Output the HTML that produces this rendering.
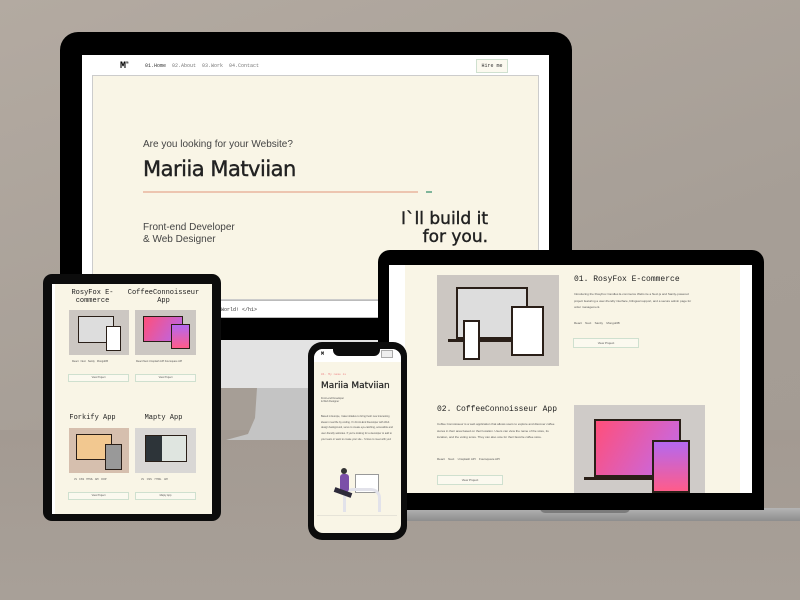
<!DOCTYPE html>
<html><head><meta charset="utf-8"><style>
*{margin:0;padding:0;box-sizing:border-box}
body{width:800px;height:600px;overflow:hidden;position:relative;background:linear-gradient(160deg,#b3aaa1 0%,#a69e96 55%,#a39b93 100%);font-family:"Liberation Sans",sans-serif}
.a{position:absolute}
.mono{font-family:"Liberation Mono",monospace}
.cream{background:#f9f5e6}
.img{background:#ccc7c2}
.btn{border:1px solid #cfe0cf;background:#fbf9ef;font-size:3px;text-align:center;color:#555}
.tiny{font-size:3px;color:#555;line-height:4px}
.hd{font-family:'DejaVu Sans',sans-serif;-webkit-text-stroke:0.4px #222}
</style></head><body>
<div class="a" style="left:0;top:430px;width:800px;height:170px;background:linear-gradient(180deg,#a39a92,#a8a098)"></div>

<!-- iMac chin and stand -->
<div class="a" style="left:212px;top:338px;width:170px;height:50px;background:#e3e3e3"></div>
<div class="a" style="left:226px;top:388px;width:156px;height:52px;background:#c4c4c4;clip-path:polygon(31px 0,100% 0,100% 100%,0 100%,22px 46px,29px 30px)"></div>
<!-- iMac -->
<div class="a" style="left:60px;top:32px;width:512px;height:308px;background:#000;border-radius:18px 18px 0 0"></div>
<div class="a" style="left:82px;top:55px;width:467px;height:263px;background:#fff"></div>
<div class="a mono" style="left:120px;top:61px;font-size:10px;font-weight:bold">M<sup style="font-size:4px">m</sup></div>
<div class="a mono" style="left:145px;top:63px;font-size:5px;color:#333">01.Home &nbsp;<span style="color:#777">02.About &nbsp;03.Work &nbsp;04.Contact</span></div>
<div class="a mono btn" style="left:476px;top:59px;width:32px;height:14px;font-size:5px;line-height:12px;color:#333">Hire me</div>
<div class="a cream" style="left:92px;top:75px;width:447px;height:225px;border:1px solid #ccc"></div>
<div class="a" style="left:143px;top:139px;font-size:10px;color:#444">Are you looking for your Website?</div>
<div class="a hd" style="left:143px;top:157px;font-size:21px;color:#222;letter-spacing:-0.5px">Mariia Matviian</div>
<div class="a" style="left:143px;top:191px;width:275px;height:2px;background:#edc5b0"></div>
<div class="a" style="left:426px;top:191px;width:6px;height:2px;background:#7fb59a"></div>
<div class="a" style="left:143px;top:222px;font-size:10px;color:#444;line-height:12px">Front-end Developer<br>&amp; Web Designer</div>
<div class="a hd" style="left:390px;top:210px;width:98px;text-align:right;font-size:17px;color:#222;line-height:18px">I`ll build it<br>for you.</div>
<div class="a" style="left:92px;top:300px;width:447px;height:18px;background:#fff;border-top:1px solid #bbb;border-bottom:1px solid #bbb"></div>
<div class="a mono" style="left:221px;top:307px;font-size:5px;color:#333">World! &lt;/h1&gt;</div>

<!-- Laptop -->
<div class="a" style="left:370px;top:508px;width:430px;height:13px;background:linear-gradient(#b4b4b4,#8d8d8d)"></div>
<div class="a" style="left:540px;top:508px;width:90px;height:5px;background:#7b7b7b;border-radius:0 0 5px 5px"></div>
<div class="a" style="left:378px;top:250px;width:386px;height:260px;background:#000;border-radius:12px 12px 0 0"></div>
<div class="a" style="left:389px;top:265px;width:363px;height:228px;background:#fff"></div>
<div class="a cream" style="left:405px;top:265px;width:335px;height:228px"></div>
<div class="a img" style="left:437px;top:275px;width:122px;height:91px"></div>
<div class="a" style="left:456px;top:287px;width:72px;height:52px;border:2px solid #2a1f18;background:#ddd"></div>
<div class="a" style="left:448px;top:339px;width:90px;height:3px;background:#2a1f18"></div>
<div class="a" style="left:511px;top:306px;width:33px;height:50px;border:2px solid #2a1f18;background:#fff"></div>
<div class="a" style="left:463px;top:320px;width:17px;height:40px;border:2px solid #2a1f18;background:#fff"></div>
<div class="a mono" style="left:574px;top:275px;font-size:8px;color:#222">01. RosyFox E-commerce</div>
<div class="a tiny" style="left:574px;top:291px;width:120px;line-height:6.5px">Introducing the RosyFox Candles E-commerce Webs ite a Next.js and Sanity-powered project featuring a user-friendly interface, bilingual support, and a secure admin page for order management.</div>
<div class="a tiny" style="left:574px;top:321px">React &nbsp;&nbsp; Next &nbsp;&nbsp; Sanity &nbsp;&nbsp; MongoDB</div>
<div class="a btn" style="left:573px;top:338px;width:66px;height:10px;line-height:8px">View Project</div>
<div class="a mono" style="left:437px;top:405px;font-size:8px;color:#222">02. CoffeeConnoisseur App</div>
<div class="a tiny" style="left:437px;top:421px;width:118px;line-height:6.5px">Coffee Connoisseur is a web application that allows users to explore and discover coffee stores in their area based on their location. Users can view the name of the store, its location, and the voting score. They can also vote for their favorite coffee store.</div>
<div class="a tiny" style="left:437px;top:457px">React &nbsp;&nbsp; Next &nbsp;&nbsp; Unsplash API &nbsp;&nbsp; Foursquare API</div>
<div class="a btn" style="left:437px;top:475px;width:66px;height:10px;line-height:8px">View Project</div>
<div class="a img" style="left:574px;top:405px;width:131px;height:88px;background:#cfcbc8"></div>
<div class="a" style="left:594px;top:419px;width:87px;height:58px;border:2px solid #2a1f18;background:linear-gradient(120deg,#ff4f7a,#c06cf0)"></div>
<div class="a" style="left:584px;top:477px;width:104px;height:3px;background:#2a1f18"></div>
<div class="a" style="left:652px;top:440px;width:38px;height:53px;border:2px solid #2a1f18;background:linear-gradient(#b468f0,#ff5c8a)"></div>

<!-- Tablet -->
<div class="a" style="left:43px;top:274px;width:178px;height:247px;background:#0c0c0c;border-radius:9px"></div>
<div class="a cream" style="left:52px;top:284px;width:160px;height:230px"></div>
<div class="a" style="left:52px;top:284px;width:3px;height:230px;background:#fff"></div>
<div class="a mono" style="left:60px;top:289px;width:65px;text-align:center;font-size:7px;line-height:8px;color:#222">RosyFox E-commerce</div>
<div class="a mono" style="left:126px;top:289px;width:75px;text-align:center;font-size:7px;line-height:8px;color:#222">CoffeeConnoisseur App</div>
<div class="a img" style="left:69px;top:310px;width:60px;height:45px"></div>
<div class="a" style="left:78px;top:316px;width:36px;height:27px;border:1px solid #2a1f18;background:#ddd"></div>
<div class="a" style="left:106px;top:326px;width:15px;height:25px;border:1px solid #2a1f18;background:#fff"></div>
<div class="a img" style="left:135px;top:310px;width:61px;height:45px"></div>
<div class="a" style="left:143px;top:316px;width:40px;height:26px;border:1px solid #2a1f18;background:linear-gradient(120deg,#ff4f7a,#b468f0)"></div>
<div class="a" style="left:171px;top:324px;width:19px;height:25px;border:1px solid #2a1f18;background:linear-gradient(#b468f0,#ff5c8a)"></div>
<div class="a tiny" style="left:72px;top:360px;font-size:2.5px">React &nbsp; Next &nbsp; Sanity &nbsp; MongoDB</div>
<div class="a tiny" style="left:136px;top:360px;font-size:2.5px">React Next Unsplash API Foursquare API</div>
<div class="a btn" style="left:68px;top:374px;width:61px;height:8px;line-height:6px;font-size:2.5px">View Project</div>
<div class="a btn" style="left:135px;top:374px;width:61px;height:8px;line-height:6px;font-size:2.5px">View Project</div>
<div class="a mono" style="left:60px;top:414px;width:65px;text-align:center;font-size:7px;color:#222">Forkify App</div>
<div class="a mono" style="left:126px;top:414px;width:75px;text-align:center;font-size:7px;color:#222">Mapty App</div>
<div class="a" style="left:69px;top:428px;width:60px;height:45px;background:#d6bfae"></div>
<div class="a" style="left:76px;top:434px;width:36px;height:26px;border:1px solid #2a1f18;background:#f2c890"></div>
<div class="a" style="left:105px;top:444px;width:17px;height:26px;border:1px solid #2a1f18;background:#999"></div>
<div class="a img" style="left:135px;top:428px;width:61px;height:45px;background:#d9d7d5"></div>
<div class="a" style="left:145px;top:435px;width:42px;height:27px;border:1px solid #2a1f18;background:linear-gradient(90deg,#2d3439 40%,#dfe5e0 40%)"></div>
<div class="a tiny" style="left:74px;top:478px;font-size:2.5px">JS &nbsp; CSS &nbsp; HTML &nbsp; API &nbsp; OOP</div>
<div class="a tiny" style="left:141px;top:478px;font-size:2.5px">JS &nbsp;&nbsp; CSS &nbsp;&nbsp; HTML &nbsp;&nbsp; API</div>
<div class="a btn" style="left:68px;top:492px;width:61px;height:8px;line-height:6px;font-size:2.5px">View Project</div>
<div class="a btn" style="left:135px;top:492px;width:61px;height:8px;line-height:6px;font-size:2.5px">Mapty App</div>

<!-- Phone -->
<div class="a" style="left:308px;top:342px;width:99px;height:198px;background:#0c0c0c;border-radius:14px"></div>
<div class="a cream" style="left:314px;top:349px;width:87px;height:184px;border-radius:9px"></div>
<div class="a" style="left:314px;top:349px;width:87px;height:13px;background:#fff;border-radius:9px 9px 0 0"></div>
<div class="a" style="left:333px;top:348px;width:47px;height:8px;background:#0c0c0c;border-radius:0 0 6px 6px"></div>
<div class="a mono" style="left:321px;top:351px;font-size:5px;font-weight:bold">M</div>
<div class="a" style="left:381px;top:350px;width:12px;height:8px;border:1px solid #aaa;background:#eee"></div>
<div class="a mono" style="left:321px;top:373px;font-size:3px;color:#e88">01. My name is</div>
<div class="a hd" style="left:321px;top:381px;font-size:9px;color:#222;-webkit-text-stroke:0.2px #222">Mariia Matviian</div>
<div class="a tiny" style="left:321px;top:397px;font-size:2.5px;line-height:3px">Front-end Developer<br>&amp; Web Designer</div>
<div class="a tiny" style="left:321px;top:414px;width:73px;font-size:2.5px;line-height:5.7px">Based in Europe, I take initiative to bring fresh new interesting ideas in real life by coding. I'm Front-End Developer with Web design background, serve to create eye-catching, accessible and user-friendly websites. If you're looking for a developer to add to your team or want to create your site - I'd love to meet with you!</div>
<div class="a" style="left:355px;top:474px;width:24px;height:19px;border:1px solid #999;background:#fff"></div>
<div class="a" style="left:343px;top:488px;width:38px;height:24px;border:3px solid #e2e2ea;border-bottom:none;border-radius:10px 10px 0 0"></div>
<div class="a" style="left:340px;top:474px;width:9px;height:18px;background:#7b4fa8;border-radius:3px"></div>
<div class="a" style="left:341px;top:468px;width:6px;height:6px;background:#333;border-radius:50%"></div>
<div class="a" style="left:334px;top:490px;width:18px;height:5px;background:#2d2a3a;transform:rotate(20deg)"></div>
<div class="a" style="left:317px;top:515px;width:80px;height:1px;background:#e6e3d8"></div>
</body></html>
